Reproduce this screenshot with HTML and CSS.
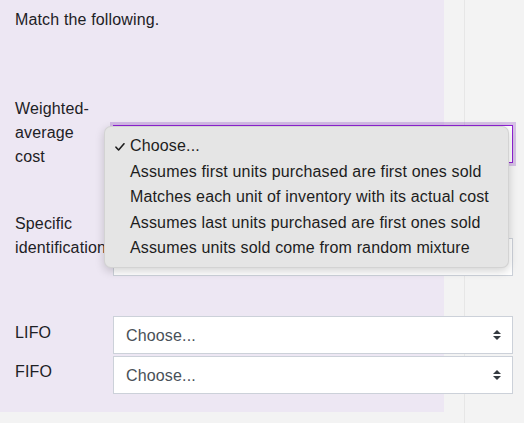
FILE: index.html
```html
<!DOCTYPE html>
<html lang="en">
<head>
<meta charset="utf-8">
<title>Match the following</title>
<link rel="stylesheet" href="styles.css">
</head>
<body>
<div class="page">
  <main class="formulation">
    <p class="qtext">Match the following.</p>

    <div class="row row-1">
      <div class="label">Weighted-average cost</div>
      <div class="control">
        <select class="select is-focused"><option>Choose...</option></select>
        <svg class="arrows" width="8" height="10" viewBox="0 0 8 10"><path d="M4 0L0 4h8zM4 10L0 6h8z" fill="#343a40"/></svg>
        <ul class="menu">
          <li class="item checked"><svg class="check" width="10" height="8" viewBox="0 0 10 8"><path d="M1 4.2L3.6 7 9 0.8" fill="none" stroke="#1d1d1d" stroke-width="1.6" stroke-linecap="round" stroke-linejoin="round"/></svg>Choose...</li>
          <li class="item">Assumes first units purchased are first ones sold</li>
          <li class="item">Matches each unit of inventory with its actual cost</li>
          <li class="item">Assumes last units purchased are first ones sold</li>
          <li class="item">Assumes units sold come from random mixture</li>
        </ul>
      </div>
    </div>

    <div class="row row-2">
      <div class="label">Specific identification</div>
      <div class="control">
        <select class="select"><option>Choose...</option></select>
        <svg class="arrows" width="8" height="10" viewBox="0 0 8 10"><path d="M4 0L0 4h8zM4 10L0 6h8z" fill="#343a40"/></svg>
      </div>
    </div>

    <div class="row row-3">
      <div class="label">LIFO</div>
      <div class="control">
        <select class="select"><option>Choose...</option></select>
        <svg class="arrows" width="8" height="10" viewBox="0 0 8 10"><path d="M4 0L0 4h8zM4 10L0 6h8z" fill="#343a40"/></svg>
      </div>
    </div>

    <div class="row row-4">
      <div class="label">FIFO</div>
      <div class="control">
        <select class="select"><option>Choose...</option></select>
        <svg class="arrows" width="8" height="10" viewBox="0 0 8 10"><path d="M4 0L0 4h8zM4 10L0 6h8z" fill="#343a40"/></svg>
      </div>
    </div>
  </main>
  <div class="gutter"></div>
  <aside class="side"></aside>
</div>
</body>
</html>
```

FILE: styles.css
```css
* { box-sizing: border-box; }

html, body {
  margin: 0;
  padding: 0;
  background: #f3f3f3;
}

body {
  font-family: "Liberation Sans", Arial, Helvetica, sans-serif;
  font-size: 16px;
  line-height: 24px;
  letter-spacing: 0.15px;
  color: #1d2125;
}

.page {
  display: flex;
  height: 423px;
  align-items: flex-start;
}

.formulation {
  width: 444px;
  flex: none;
  background: #ede7f3;
  padding: 8px 0 18px 15px;
}

.gutter {
  width: 20px;
  flex: none;
}

.side {
  flex: 1;
  align-self: stretch;
  border-left: 1px solid #e6e6e6;
}

.qtext {
  margin: 0;
}

.row {
  display: flex;
  align-items: flex-start;
  column-gap: 12px;
}

.label {
  width: 86px;
  flex: none;
}

.control {
  position: relative;
  width: 400px;
  flex: none;
}

.row-1 { margin-top: 65px; }
.row-1 .control { margin-top: 28px; }

.row-2 { margin-top: 43px; }
.row-2 .control { margin-top: 26px; }

.row-3 { margin-top: 40px; }
.row-3 .label { margin-top: 5px; }

.row-4 { margin-top: 2px; }
.row-4 .label { margin-top: 4px; }

.select {
  display: block;
  width: 400px;
  height: 38px;
  margin: 0;
  padding: 0 30px 0 12px;
  border: 1px solid #ccd1d9;
  border-radius: 0;
  background: #fff;
  color: #495057;
  font-family: "Liberation Sans", Arial, Helvetica, sans-serif;
  font-size: 16px;
  letter-spacing: 0.15px;
  -webkit-appearance: none;
  appearance: none;
  outline: none;
}

.select.is-focused {
  border-color: #8e22d3;
  box-shadow: 0 0 0 3px rgba(150, 80, 200, 0.3);
}

.arrows {
  position: absolute;
  right: 12px;
  top: 14px;
  pointer-events: none;
}

.menu {
  position: absolute;
  z-index: 5;
  left: -9px;
  top: 1px;
  width: 405px;
  margin: 0;
  padding: 6px 0;
  list-style: none;
  background: #e5e5e5;
  border-radius: 7px;
  border: 1px solid rgba(0, 0, 0, 0.08);
  box-shadow: 0 3px 10px rgba(0, 0, 0, 0.18);
  color: #1d1d1d;
}

.item {
  position: relative;
  padding-left: 25px;
  line-height: 25.5px;
  white-space: nowrap;
}

.check {
  position: absolute;
  left: 10px;
  top: 10px;
}
```
